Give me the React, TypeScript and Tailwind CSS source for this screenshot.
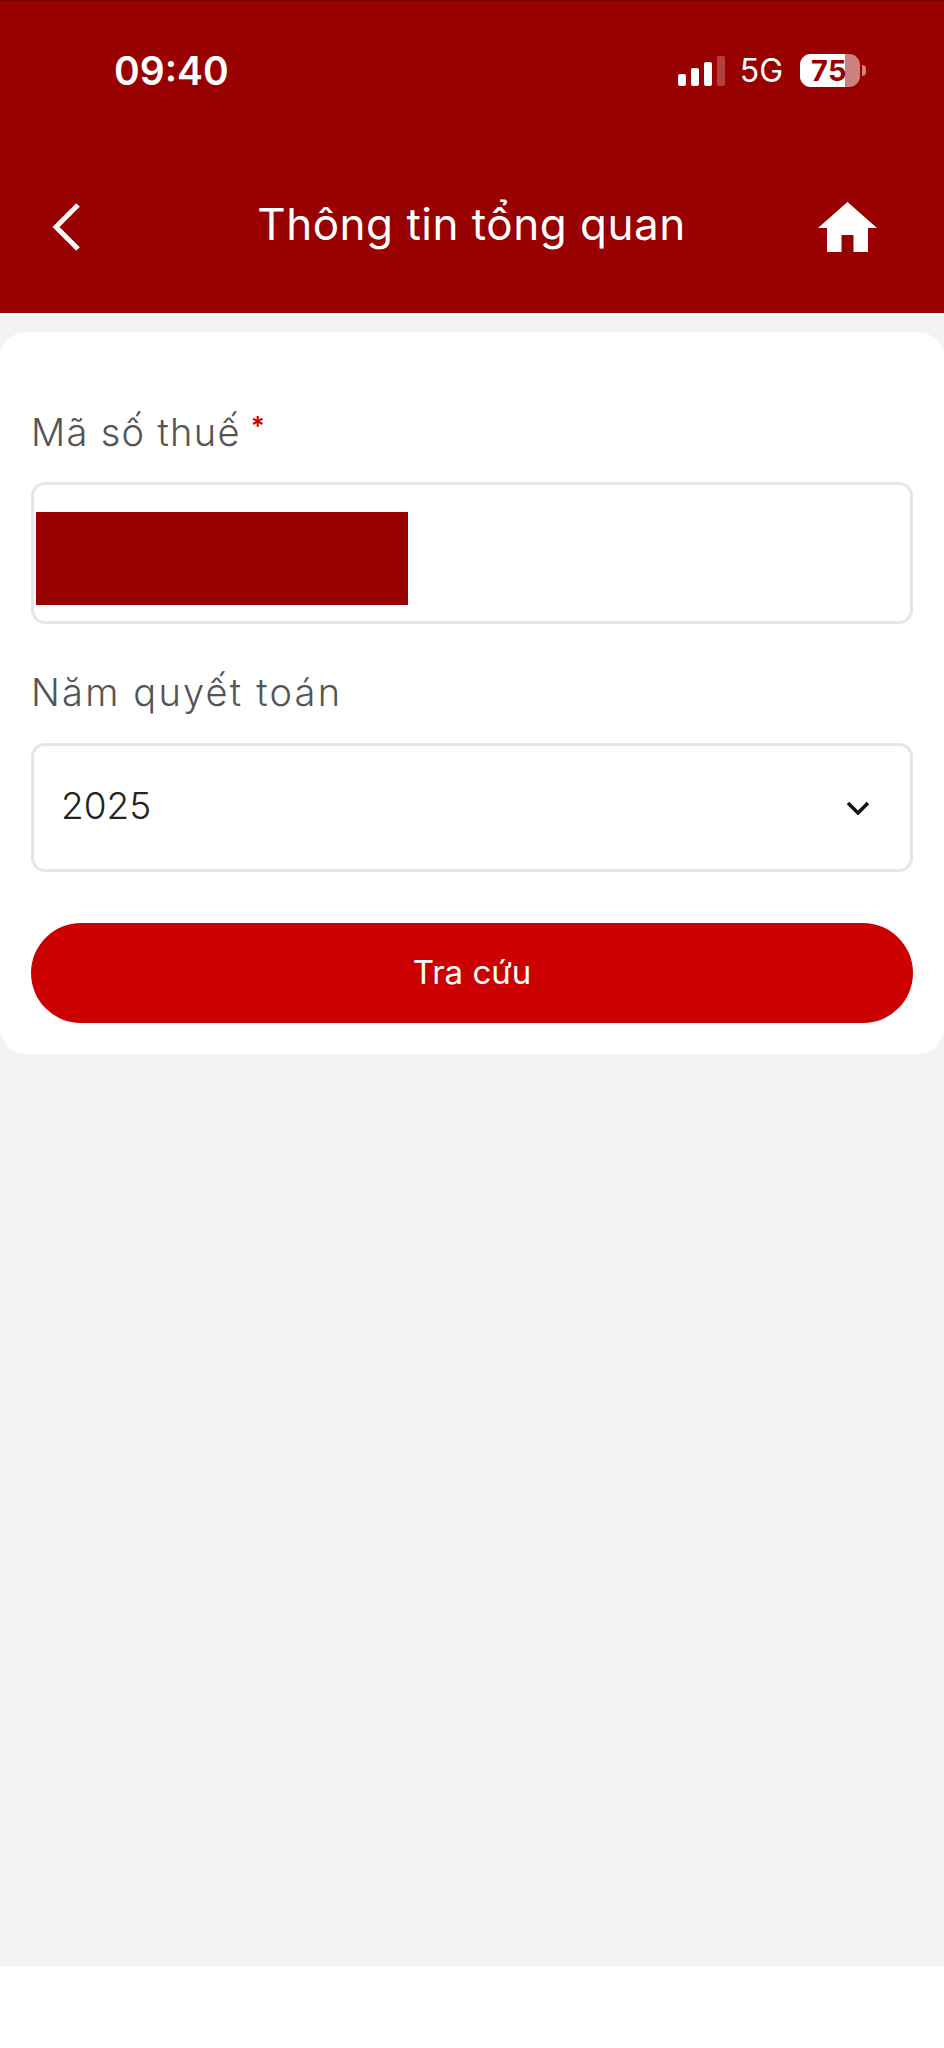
import React from "react";

const SignalIcon = () => (
  <div className="flex items-end gap-[5px] h-[30px]">
    <div className="w-[8px] h-[12px] rounded-[2px] bg-white"></div>
    <div className="w-[8px] h-[18px] rounded-[2px] bg-white"></div>
    <div className="w-[8px] h-[24px] rounded-[2px] bg-white"></div>
    <div className="w-[8px] h-[30px] rounded-[2px] bg-white/25"></div>
  </div>
);

const BatteryIcon = () => (
  <div className="flex items-center gap-[2px]">
    <div className="relative w-[60px] h-[33px] rounded-[11px] overflow-hidden bg-white/50">
      <div className="h-full w-[45px] bg-white"></div>
      <span className="absolute inset-0 flex items-center justify-center pr-[2px] font-bold text-[29px] leading-none tracking-[0.5px] text-[#990000]">
        75
      </span>
    </div>
    <div className="w-[4px] h-[11px] rounded-r-full bg-white/50"></div>
  </div>
);

const App = () => {
  return (
    <div className="flex flex-col h-[2048px] w-[944px] bg-white font-['Inter',sans-serif]">

      {/* Header */}
      <div className="h-[316px] shrink-0 bg-[#990000] border-t border-[#7d0000] border-b-[3px] border-b-white">
        <div className="flex items-center justify-between h-[33px] mt-[53px] pl-[114px] pr-[78px]">
          <span className="font-semibold text-[39px] leading-none text-white">09:40</span>
          <div className="flex items-center">
            <SignalIcon />
            <span className="ml-[15px] mr-[17px] text-[32px] leading-none text-white">5G</span>
            <BatteryIcon />
          </div>
        </div>

        <div className="grid grid-cols-[1fr_auto_1fr] items-center mt-[115px] pl-[52px] pr-[67px] h-[50px]">
          <svg width="28" height="48" viewBox="0 0 28 48" fill="none" stroke="white" strokeWidth="5">
            <path d="M26 2 L4 24 L26 46" />
          </svg>
          <h1 className="mb-[6px] pl-[14px] text-[44px] leading-none tracking-[0.5px] text-white font-normal">Thông tin tổng quan</h1>
          <svg className="justify-self-end" width="59" height="50" viewBox="0 0 59 50" fill="white">
            <path d="M29.5 0 L59 26 H50 V50 H35.5 V33 H23.5 V50 H9 V26 H0 Z" />
          </svg>
        </div>
      </div>

      {/* Body */}
      <div className="h-[1650px] shrink-0 bg-[#f3f3f3] pt-[16px]">
        <div className="bg-white rounded-[26px] h-[722px] px-[31px] pt-[75px]">
          <div className="flex items-start h-[50px] text-[38px] leading-[50px] tracking-[1.3px] font-light text-[#555555]">
            <span>Mã số thuế</span>
            <span className="ml-[10px] text-[26px] leading-[38px] font-semibold text-[#cc0000]">*</span>
          </div>

          <div className="h-[142px] mt-[25px] border-[3px] border-[#e6e6e6] rounded-[14px] pl-[2px] pt-[27px]">
            <div className="w-[372px] h-[93px] bg-[#990000]"></div>
          </div>

          <div className="h-[50px] mt-[43px] text-[38px] leading-[50px] tracking-[2.2px] font-light text-[#555555]">Năm quyết toán</div>

          <div className="flex items-center justify-between h-[129px] mt-[26px] border-[3px] border-[#e6e6e6] rounded-[14px] pl-[27px] pr-[40px]">
            <span className="pb-[4px] text-[37px] leading-none font-light text-[#222222]">2025</span>
            <svg width="24" height="14" viewBox="0 0 24 14" fill="none" stroke="#111111" strokeWidth="3.5">
              <path d="M2 2 L12 12 L22 2" />
            </svg>
          </div>

          <button className="w-full h-[100px] mt-[51px] rounded-full bg-[#cc0000] text-[33px] font-normal text-white">
            Tra cứu
          </button>
        </div>
      </div>

      {/* Bottom strip */}
      <div className="flex-1 bg-white"></div>
    </div>
  );
};

export default App;
